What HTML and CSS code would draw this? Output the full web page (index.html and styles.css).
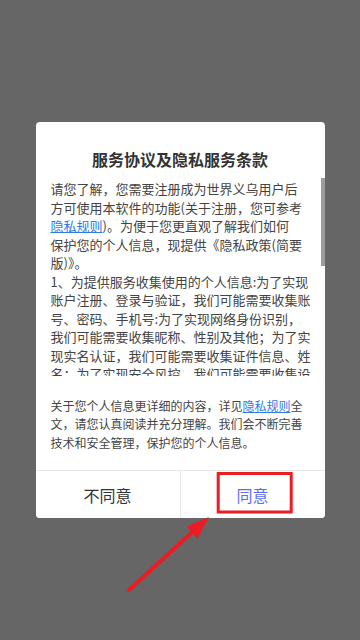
FILE: index.html
```html
<!DOCTYPE html>
<html lang="zh-CN">
<head>
<meta charset="utf-8">
<meta name="viewport" content="width=360, initial-scale=1">
<title>服务协议及隐私服务条款</title>
<link rel="stylesheet" href="styles.css">
</head>
<body>
<div class="dialog">
  <h1 class="dialog-title">服务协议及隐私服务条款</h1>
  <div class="scroll-wrap">
    <div class="dialog-scroll">
      <p class="para">请您了解，您需要注册成为世界义乌用户后<br>方可使用本软件的功能(关于注册，您可参考<a class="link" href="#">隐私规则</a>)。为便于您更直观了解我们如何<br>保护您的个人信息，现提供《隐私政策(简要版)》。</p>
      <p class="para">1、为提供服务收集使用的个人信息:为了实现账户注册、登录与验证，我们可能需要收集账号、密码、手机号:为了实现网络身份识别，我们可能需要收集昵称、性别及其他；为了实现实名认证，我们可能需要收集证件信息、姓名；为了实现安全风控，我们可能需要收集设备信息、日志信息；为了实现交易功能，我们可能需要收集收货地址、联系人信息及支付信息。</p>
      <p class="para">2、为了向您提供更好的服务，我们可能会申请设备权限，包括位置、相机、存储、通讯录等，您可以在设备设置中随时开启或关闭相关权限。</p>
      <p class="para">3、我们会采取符合业界标准的安全防护措施保护您的个人信息，未经您的同意，我们不会向第三方共享、转让或公开披露您的个人信息。</p>
    </div>
    <div class="scroll-thumb"></div>
  </div>
  <p class="dialog-note">关于您个人信息更详细的内容，详见<a class="link" href="#">隐私规则</a>全文，请您认真阅读并充分理解。我们会不断完善技术和安全管理，保护您的个人信息。</p>
  <div class="dialog-actions">
    <button class="action action-cancel" type="button">不同意</button>
    <button class="action action-ok" type="button">同意</button>
  </div>
</div>
<svg class="annotation" width="360" height="640" viewBox="0 0 360 640" aria-hidden="true">
  <rect x="218.2" y="473.5" width="73" height="38.5" fill="none" stroke="#ec1c24" stroke-width="3"/>
  <line x1="129" y1="590" x2="193" y2="531.6" stroke="#ec1c24" stroke-width="4" stroke-linecap="round"/>
  <polygon points="209,517 197.4,538.4 186.6,526.6" fill="#ec1c24"/>
</svg>
</body>
</html>
```

FILE: styles.css
```css
html, body {
  margin: 0;
  padding: 0;
}

body {
  background: #666666;
  min-height: 100vh;
  display: flex;
  align-items: center;
  justify-content: center;
  font-family: "Noto Sans CJK SC", "Noto Sans", sans-serif;
  color: #444444;
}

.dialog {
  width: 289px;
  background: #ffffff;
  border-radius: 4px;
  display: flex;
  flex-direction: column;
  overflow: hidden;
}

.dialog-title {
  margin: 0;
  padding: 26px 15px 8px;
  font-size: 16px;
  line-height: 22px;
  font-weight: 700;
  color: #333333;
  text-align: center;
}

.scroll-wrap {
  position: relative;
}

.dialog-scroll {
  height: 198px;
  box-sizing: border-box;
  padding: 2.5px 14px 0 15px;
  overflow-y: scroll;
  scrollbar-width: none;
}

.dialog-scroll::-webkit-scrollbar {
  display: none;
}

.scroll-thumb {
  position: absolute;
  top: 0;
  right: 0;
  width: 4px;
  height: 88px;
  background: #9c9c9c;
}

.para {
  margin: 0;
  font-size: 13px;
  line-height: 18.5px;
  color: #444444;
}

.link {
  color: #2e7be6;
  text-decoration: underline;
}

.dialog-note {
  margin: 0;
  padding: 21px 14px 18px 15px;
  font-size: 12px;
  line-height: 18.5px;
  color: #444444;
}

.dialog-actions {
  display: flex;
  border-top: 1px solid #e8e8e8;
}

.action {
  flex: 1 1 0;
  height: 47px;
  margin: 0;
  padding: 0;
  border: none;
  background: #ffffff;
  font-family: inherit;
  font-size: 16px;
  color: #333333;
}

.action-ok {
  border-left: 1px solid #e8e8e8;
  color: #5d6cf4;
}

.annotation {
  position: fixed;
  left: 0;
  top: 0;
  pointer-events: none;
}
```
